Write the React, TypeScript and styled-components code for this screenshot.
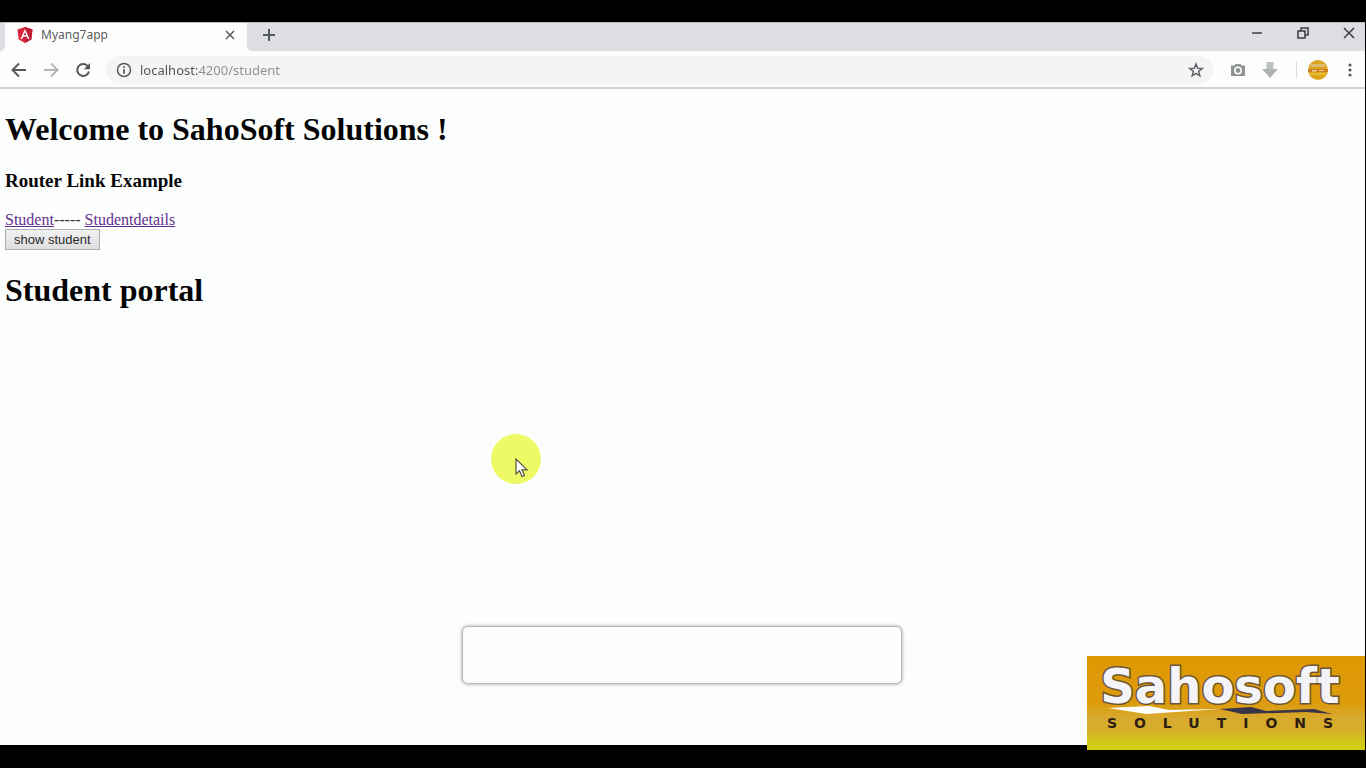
import React from "react";
import styled, { createGlobalStyle } from "styled-components";

const GlobalStyle = createGlobalStyle`
  * { box-sizing: border-box; }
  body { margin: 0; background: #000; }
`;

const Screen = styled.div`
  position: relative;
  display: flex;
  flex-direction: column;
  min-height: 100vh;
  padding: 22px 1px 23px 0;
  background: #000;
`;

const TabStrip = styled.header`
  display: flex;
  align-items: stretch;
  height: 29px;
  padding-left: 5px;
  background: #dcdee3;
  border-top: 1px solid #b4b6b9;
`;

const Tab = styled.div`
  position: relative;
  display: flex;
  align-items: center;
  gap: 8px;
  width: 242px;
  padding: 0 10px 4px 12px;
  background: #fdfdfd;
  font: 12px/16px "Noto Sans", "Open Sans", sans-serif;
  color: #5c5e61;

  &::before,
  &::after {
    content: "";
    position: absolute;
    bottom: 0;
    width: 5px;
    height: 5px;
  }
  &::before {
    right: 100%;
    background: radial-gradient(circle at 0 0, #dcdee3 5px, #fdfdfd 5px);
  }
  &::after {
    left: 100%;
    background: radial-gradient(circle at 100% 0, #dcdee3 5px, #fdfdfd 5px);
  }
`;

const TabTitle = styled.span`
  flex: 1;
`;

const IconButton = styled.button<{ $size?: number; $color?: string }>`
  display: flex;
  align-items: center;
  justify-content: center;
  flex: none;
  width: ${(p) => p.$size ?? 20}px;
  height: ${(p) => p.$size ?? 20}px;
  padding: 0;
  border: 0;
  background: none;
  color: ${(p) => p.$color ?? "#55585b"};
`;

const NewTab = styled.div`
  display: flex;
  align-items: center;
  padding: 0 0 4px 12px;
`;

const WindowControls = styled.div`
  display: flex;
  gap: 26px;
  margin-left: auto;
  padding-right: 6px;
`;

const Toolbar = styled.nav`
  display: flex;
  align-items: center;
  height: 38px;
  padding: 2px 5px 0 9px;
  background: #fdfdfd;
  border-bottom: 2px solid #d3d5d5;
`;

const NavGroup = styled.div`
  display: flex;
  gap: 12px;
`;

const AddressBar = styled.label`
  display: flex;
  align-items: center;
  gap: 8px;
  flex: 1;
  height: 28px;
  margin-left: 13px;
  padding: 0 7px 0 10px;
  border-radius: 14px;
  background: #f3f4f5;
`;

const AddressInput = styled.input`
  flex: 1;
  min-width: 0;
  padding: 0;
  border: 0;
  outline: 0;
  font: 13px/18px "Noto Sans", "Open Sans", sans-serif;
  color: #55575a;
  background: linear-gradient(90deg, #4f5154 57px, #8b8d90 57px);
  background-clip: text;
  -webkit-text-fill-color: transparent;
`;

const Extensions = styled.div`
  display: flex;
  align-items: center;
  gap: 12px;
  margin-left: 15px;
`;

const Divider = styled.span`
  width: 1px;
  height: 16px;
  margin: 0 -1px 0 4px;
  background: #d9dbdc;
`;

const Page = styled.main`
  flex: 1;
  padding: 22px 5px;
  background: #fcfefd;
  color: #050505;
  font: 16px/18px "Liberation Serif", serif;
`;

const Title = styled.h1`
  margin: 0;
  font-size: 32px;
  line-height: 36px;
`;

const Subtitle = styled.h3`
  margin: 23px 0 19px;
  font-size: 19px;
  line-height: 22px;
`;

const RouteLink = styled.a`
  color: #63308f;
`;

const Links = styled.div`
  color: #333;
  font-size: 16px;
`;

const ShowButton = styled.button`
  display: block;
  height: 21px;
  margin-bottom: 22px;
  padding: 0 8px;
  border: 1px solid #adadad;
  background: linear-gradient(#f1f1f1, #dedede);
  color: #2a2a2a;
  font: 13px/18px "Liberation Sans", sans-serif;
`;

const Caption = styled.div`
  position: absolute;
  left: 50%;
  bottom: 84px;
  width: 440px;
  height: 58px;
  margin-left: -221px;
  border: 1px solid #b5b8b6;
  border-radius: 6px;
  background: #fcfefd;
  box-shadow: 0 0 3px 1px #c3c6c4;
`;

const Pointer = styled.div`
  position: absolute;
  left: 491px;
  top: 434px;
  width: 50px;
  height: 50px;
  border-radius: 50%;
  background: #edfa66;

  svg {
    position: absolute;
    left: 24px;
    top: 24px;
  }
`;

const Brand = styled.div`
  position: absolute;
  right: 1px;
  bottom: 18px;
  display: flex;
  flex-direction: column;
  align-items: center;
  width: 278px;
  height: 94px;
  padding: 10px 12px 0 0;
  background: linear-gradient(#df9803 0%, #dd9b0c 50%, #d7a92f 66%, #d4b02a 80%, #d0d011 97%);
`;

const BrandName = styled.span`
  font: bold 48px/40px "DejaVu Sans", sans-serif;
  color: #f4f4f8;
  -webkit-text-stroke: 3px #6b5536;
  paint-order: stroke fill;
`;

const BrandSub = styled.span`
  padding-left: 16px;
  font: bold 14px/16px "DejaVu Sans", sans-serif;
  letter-spacing: 17px;
  margin-right: -17px;
  padding-left: 0;
  color: #2d2010;
`;

const AngularIcon = () => (
  <svg width="16" height="16" viewBox="0 0 16 16" aria-hidden="true">
    <path d="M8 0 15.500 2.600 14.300 12.500 8 16 1.700 12.500 .5 2.600Z" fill="#d9263b" />
    <path d="M8 0 15.500 2.600 14.300 12.500 8 16Z" fill="#bd1c35" />
    <path d="M8 2 3.500 12H5.200L6.100 9.700H9.900L10.800 12H12.500ZM8 5.200 9.300 8.300H6.700Z" fill="#fff" fillRule="evenodd" />
  </svg>
);

const Stroke = ({ d, size = 16, width = 2 }: { d: string; size?: number; width?: number }) => (
  <svg width={size} height={size} viewBox={`0 0 ${size} ${size}`} fill="none" stroke="currentColor" strokeWidth={width} aria-hidden="true">
    <path d={d} />
  </svg>
);

export default function App() {
  return (
    <Screen>
      <GlobalStyle />
      <TabStrip>
        <Tab>
          <AngularIcon />
          <TabTitle>Myang7app</TabTitle>
          <IconButton $size={14} aria-label="Close tab">
            <Stroke size={10} d="M1 1 9 9M9 1 1 9" width={1.5} />
          </IconButton>
        </Tab>
        <NewTab>
          <IconButton aria-label="New tab">
            <Stroke size={14} d="M7 1V13M1 7H13" />
          </IconButton>
        </NewTab>
        <WindowControls>
          <IconButton aria-label="Minimize" $color="#3a3c40">
            <Stroke size={12} d="M1 6H11" width={1.5} />
          </IconButton>
          <IconButton aria-label="Restore" $color="#3a3c40">
            <Stroke size={12} d="M1 4H8V11H1ZM4 4V1H11V8H8" width={1.5} />
          </IconButton>
          <IconButton aria-label="Close window" $color="#3a3c40">
            <Stroke size={12} d="M1 1 11 11M11 1 1 11" width={1.5} />
          </IconButton>
        </WindowControls>
      </TabStrip>
      <Toolbar>
        <NavGroup>
          <IconButton aria-label="Back">
            <Stroke d="M15 8H2M8 1.500 1.500 8 8 14.500" />
          </IconButton>
          <IconButton aria-label="Forward" $color="#b3b5b7">
            <Stroke d="M1 8H14M8 1.500 14.500 8 8 14.500" />
          </IconButton>
          <IconButton aria-label="Reload">
            <svg width="16" height="16" viewBox="0 0 16 16" aria-hidden="true">
              <path d="M13 4.300A6 6 0 1 0 14 9.500" fill="none" stroke="currentColor" strokeWidth="2" />
              <path d="M15 1V7.200H8.800Z" fill="currentColor" />
            </svg>
          </IconButton>
        </NavGroup>
        <AddressBar>
          <svg width="16" height="16" viewBox="0 0 16 16" fill="none" stroke="#5a5d60" strokeWidth="1.500" aria-hidden="true">
            <circle cx="8" cy="8" r="6.500" />
            <path d="M8 7.200V11.800M8 4.200V5.900" strokeWidth="1.800" />
          </svg>
          <AddressInput aria-label="Address" defaultValue="localhost:4200/student" spellCheck={false} />
          <IconButton aria-label="Bookmark this page" $color="#606366">
            <Stroke d="M8 2 9.700 6.200 14.200 6.500 10.700 9.400 11.800 13.800 8 11.400 4.200 13.800 5.300 9.400 1.800 6.500 6.300 6.200Z" width={1.5} />
          </IconButton>
        </AddressBar>
        <Extensions>
          <IconButton aria-label="Capture screen" $color="#909394">
            <svg width="16" height="14" viewBox="0 0 16 14" aria-hidden="true">
              <path d="M1 2.500H4.500L5.500 1H10.500L11.500 2.500H15V13H1Z" fill="currentColor" />
              <circle cx="8" cy="7.500" r="3.200" fill="#909394" stroke="#fff" strokeWidth="1.500" />
            </svg>
          </IconButton>
          <IconButton aria-label="Downloads" $color="#b0b3b3">
            <svg width="18" height="16" viewBox="0 0 18 16" aria-hidden="true">
              <path d="M5.500 0H12.500V7H5.500Z" fill="#bec1c1" />
              <path d="M1 7H17L9 16Z" fill="currentColor" />
            </svg>
          </IconButton>
          <Divider />
          <IconButton aria-label="Profile">
            <svg width="20" height="20" viewBox="0 0 20 20" aria-hidden="true">
              <circle cx="10" cy="10" r="10" fill="#dda51f" />
              <path d="M3.500 4H16.500L18 7H2Z" fill="#ddbb70" />
              <path d="M0 9H20V12H0Z" fill="#cc7d22" />
              <path d="M4 10H8L9 11.500H4ZM11 10H16V11H11Z" fill="#f0d5a0" />
              <path d="M2 14H18" stroke="#e6c02c" strokeWidth="2" />
            </svg>
          </IconButton>
          <IconButton aria-label="Menu">
            <svg width="4" height="14" viewBox="0 0 4 14" fill="currentColor" aria-hidden="true">
              <circle cx="2" cy="2" r="1.600" />
              <circle cx="2" cy="7" r="1.600" />
              <circle cx="2" cy="12" r="1.600" />
            </svg>
          </IconButton>
        </Extensions>
      </Toolbar>
      <Page>
        <Title>Welcome to SahoSoft Solutions !</Title>
        <Subtitle>Router Link Example</Subtitle>
        <Links>
          <RouteLink href="#student">Student</RouteLink>----- <RouteLink href="#studentdetails">Studentdetails</RouteLink>
        </Links>
        <ShowButton type="button">show student</ShowButton>
        <Title as="h2">Student portal</Title>
      </Page>
      <Pointer>
        <svg width="14" height="20" viewBox="0 0 14 20" aria-hidden="true">
          <path d="M1 1V16L4.500 12.800 7 18.500 9.500 17.400 7 11.800H12Z" fill="#fff" stroke="#55553f" strokeWidth="1.200" />
        </svg>
      </Pointer>
      <Caption />
      <Brand>
        <BrandName>Sahosoft</BrandName>
        <svg width="224" height="9" viewBox="0 0 224 9" aria-hidden="true">
          <path d="M0 2 41 0 61 4 112 3 38 8Z" fill="#fff" />
          <path d="M112 3 143 1 158 5 206 3 224 8 198 6 134 8Z" fill="#373448" />
        </svg>
        <BrandSub>SOLUTIONS</BrandSub>
      </Brand>
    </Screen>
  );
}
